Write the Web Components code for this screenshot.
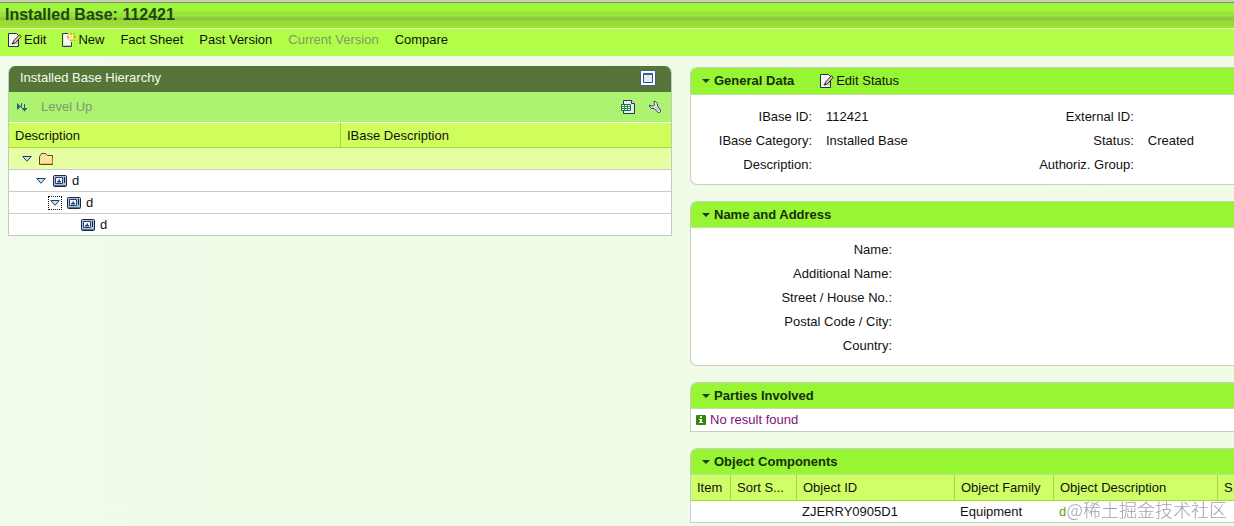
<!DOCTYPE html>
<html lang="en">
<head>
<meta charset="utf-8">
<meta name="viewport" content="width=device-width, initial-scale=1">
<title>Installed Base: 112421</title>
<style>
  html { background: #effbe7; }
  body { margin: 0; font: 13px/20px "Liberation Sans", Arial, sans-serif; color: #111; overflow-x: hidden; }
</style>
</head>
<body>
<ib-page></ib-page>

<script>
const define = (name, html, setup) => {
  const template = document.createElement('template');
  template.innerHTML = html;
  customElements.define(name, class extends HTMLElement {
    constructor() {
      super();
      this.attachShadow({ mode: 'open' }).append(template.content.cloneNode(true));
    }
    connectedCallback() { if (setup) setup(this, this.shadowRoot); }
  });
};

const ICONS = {
  edit: [14, 14, `<path d="M.5.5h8l2 2v11H.5z" fill="#f4f6fb" stroke="#2a3040"/><path d="M2 11h8V5l-5 5H2z" fill="#c5cedd"/><path d="M4.600 11l1-3L11.400 1.800l1.800 1.600L7.400 9.800z" fill="#f5cf8c" stroke="#20242c"/><path d="M4 11.500l1-2 1 1z" fill="#20242c"/>`],
  create: [14, 14, `<path d="M1.500.5h8v13h-8z" fill="#f7f8fc"/><path d="M6 .5H.5v13h9V9" fill="none" stroke="#383c50"/><path d="M2 12h7v1H2z" fill="#b9c1d2"/><circle cx="9" cy="4" r="3.500" fill="#fff6a8"/><circle cx="9" cy="4" r="3.500" fill="none" stroke="#bb8a08" stroke-dasharray="1.200 1.500"/><path d="M9 0v2M9 6.500v2M5 4h2M11 4h3M11.500 1.500l1.500-1.500M11.500 6.500l1.500 1.500" stroke="#c79312"/><circle cx="9" cy="4" r="1.500" fill="#ffe53d"/>`],
  level: [10, 10, `<path d="M0 1v7l4-3.500z" fill="#2a5f78"/><path d="M4.500 1v5" stroke="#2a5f78"/><path d="M7.500 2v6M5 6.500h5" stroke="#245a76"/><path d="M5 6.500h5L7.500 9.500z" fill="#245a76"/>`],
  window: [16, 16, `<path d="M.5.5h15v15H.5z" fill="#fff" stroke="#3a6090"/><path d="M3.500 3.500h9v9h-9z" fill="#e3ecee" stroke="#2f557f"/><path d="M3 3h10v2H3z" fill="#2f6296"/>`],
  sheet: [14, 14, `<path d="M2.500.5h8l3 3v10h-11z" fill="#e6ecf2" stroke="#283848"/><path d="M10.500.5v3h3" fill="#fff" stroke="#283848"/><path d="M.5 4.500h9v6h-9z" fill="#f5fff5" stroke="#167046"/><path d="M1 6.500h8M1 8.500h8M3.500 5v5M6.500 5v5" stroke="#2a9260"/>`],
  wrench: [12, 12, `<path d="M5 .5h1.500l2 2v2.500l3 4v1.500l-1 1H9L5.200 7.500H2.500l-2-2V4l2 1h2l.800-.800V2.500z" fill="#dce2e5" stroke="#3b4650"/><path d="M6.500 6l3.500 4" stroke="#aab6bc"/>`],
  folder: [14, 12, `<path d="M.5 11.500v-8l2-3h4l2 2h5v9z" fill="#ffe49c" stroke="#5c4322"/><path d="M2 4h11" stroke="#fff4c8"/><path d="M2 10.500h11V5" fill="none" stroke="#efbd64"/>`],
  object: [14, 12, `<rect x=".5" y=".5" width="13" height="11" rx="1" fill="#a9c2e0" stroke="#1c2744"/><path d="M2.500 2.500h7v6h-7z" fill="#f4f8ff" stroke="#2b4068"/><path d="M4 7.500V6h1.500V4.500H7V6h1v1.500z" fill="#2b4068"/><path d="M11.500 2v6" stroke="#1c2744"/><path d="M1 10.500h12" stroke="#54719b"/>`],
  open: [10, 6, `<path d="M.8.5h8.400L5 5.300z" fill="#c9e1f5" stroke="#24405f"/>`],
  caret: [8, 4, `<path d="M0 0h8L4 4z" fill="#1d4010"/>`],
  info: [10, 10, `<rect width="10" height="10" rx="1" fill="#2f8a0b"/><path d="M4 1h2v2H4zM3 4h3v3h1v1H3V7h1V5H3z" fill="#f4ffe9"/>`]
};

define('ui-icon', `
  <style>:host { display: inline-flex; flex: none; } svg { display: block; }</style>
  <svg aria-hidden="true"></svg>`, (el, root) => {
  const [w, h, body] = ICONS[el.getAttribute('name')];
  const svg = root.querySelector('svg');
  svg.setAttribute('width', w);
  svg.setAttribute('height', h);
  svg.setAttribute('viewBox', `0 0 ${w} ${h}`);
  svg.innerHTML = body;
});

define('ui-action', `
  <style>
    :host { display: inline-flex; }
    button { display: flex; align-items: center; gap: 2px; margin: 0; padding: 0; border: 0; background: none;
      font: inherit; color: inherit; white-space: nowrap; cursor: pointer; }
    button:disabled { color: #7d9a70; cursor: default; }
  </style>
  <button type="button"><slot name="icon"></slot><slot></slot></button>`, (el, root) => {
  const button = root.querySelector('button');
  button.disabled = el.hasAttribute('disabled');
  if (el.hasAttribute('label')) button.setAttribute('aria-label', el.getAttribute('label'));
});

define('ib-header', `
  <style>
    :host { display: block; }
    .title { border-top: 2px solid #cbcdbd; background: linear-gradient(#77955a 0 1px, #a0f43c 1px 9px, #97e43b 10px 14px, #8bcb3f 16px 18px, #9adb35 19px 22px, #9fe338); border-bottom: 1px solid #e6fbc4; }
    h1 { margin: 0; padding: 1px 5px; font-size: 16px; line-height: 24px; color: #234510; }
    .bar { display: flex; gap: 16px; padding: 0 8px 6px; background: #b1fd48; border-top: 1px solid #b1fd48; }
  </style>
  <div class="title"><h1><slot name="title"></slot></h1></div>
  <div class="bar"><slot></slot></div>`);

define('ib-tree', `
  <style>
    :host { display: block; border: 1px solid #c3cbbd; border-top: 0; border-radius: 7px 7px 0 0; overflow: hidden; background: #fff; }
    header { display: flex; align-items: center; justify-content: space-between; height: 26px; padding: 0 15px 2px 11px; box-sizing: border-box; background: #587539; color: #f5fbef; }
    h2 { margin: 0; font: inherit; }
    .tools { display: flex; align-items: center; height: 30px; padding: 0 10px 0 8px; gap: 14px; background: #aef272; }
    .tools .push { margin-left: auto; }
    table { width: 100%; border-collapse: separate; border-spacing: 0; table-layout: fixed; }
    th, td { box-sizing: border-box; padding: 0 6px; text-align: left; font-weight: normal; }
    th { height: 26px; padding-top: 2px; background: #cffe5c; border-top: 1px solid #f2ffe0; border-bottom: 1px solid #a6d83c; }
    th + th { border-left: 1px solid #a6d83c; }
    td { height: 22px; border-bottom: 1px solid #c9cdca; }
    tr:last-child td { height: 21px; border-bottom: 0; }
    .selected td { background: #e6ffa3; }
    .node { display: flex; align-items: center; gap: 5px; height: 21px; }
    .l1 { padding-left: 5px; } .l2 { padding-left: 19px; } .l3 { padding-left: 33px; } .l4 { padding-left: 66px; }
    .toggle { display: flex; align-items: center; justify-content: center; box-sizing: border-box; width: 14px; height: 14px; padding: 0; margin: 0; border: 1px dotted transparent; background: none; }
    .focus { border-color: #111; }
  </style>
  <header><h2>Installed Base Hierarchy</h2><ui-action label="Maximize"><ui-icon slot="icon" name="window"></ui-icon></ui-action></header>
  <div class="tools">
    <ui-action label="Expand level"><ui-icon slot="icon" name="level"></ui-icon></ui-action>
    <ui-action disabled>Level Up</ui-action>
    <ui-action class="push" label="Export"><ui-icon slot="icon" name="sheet"></ui-icon></ui-action>
    <ui-action label="Personalize"><ui-icon slot="icon" name="wrench"></ui-icon></ui-action>
  </div>
  <table>
    <thead><tr><th>Description</th><th>IBase Description</th></tr></thead>
    <tbody>
      <tr class="selected"><td colspan="2"><div class="node l1"><button class="toggle" type="button" aria-label="Collapse"><ui-icon name="open"></ui-icon></button><ui-icon name="folder"></ui-icon></div></td></tr>
      <tr><td colspan="2"><div class="node l2"><button class="toggle" type="button" aria-label="Collapse"><ui-icon name="open"></ui-icon></button><ui-icon name="object"></ui-icon><span>d</span></div></td></tr>
      <tr><td colspan="2"><div class="node l3"><button class="toggle focus" type="button" aria-label="Collapse"><ui-icon name="open"></ui-icon></button><ui-icon name="object"></ui-icon><span>d</span></div></td></tr>
      <tr><td colspan="2"><div class="node l4"><ui-icon name="object"></ui-icon><span>d</span></div></td></tr>
    </tbody>
  </table>`);

define('ib-section', `
  <style>
    :host { display: block; border: 1px solid #c5cfc2; border-right: 0; border-radius: 7px 0 0 0; overflow: hidden; background: #fff; }
    :host([rounded]) { border-bottom-left-radius: 7px; }
    header { display: flex; align-items: center; gap: 26px; height: 26px; padding-left: 11px; background: #97f534; border-bottom: 1px solid #bfe1a0; box-sizing: border-box; }
    :host([actions]) header { height: 27px; }
    h2 { margin: 0; font: inherit; font-weight: bold; }
    button { display: flex; align-items: center; gap: 4px; margin: 0; padding: 0; border: 0; background: none; font: inherit; color: #163009; }
  </style>
  <header><h2><button type="button" aria-expanded="true"><ui-icon name="caret"></ui-icon><slot name="title"></slot></button></h2><slot name="action"></slot></header>
  <slot></slot>`);

define('ib-fields', `
  <style>
    :host { display: grid; column-gap: 14px; grid-auto-rows: 24px; line-height: 24px; padding: 10px 0 7px; white-space: nowrap;
      grid-template-columns: 121px minmax(0, 13fr) 107px minmax(0, 6fr); }
    :host([single]) { grid-template-columns: 201px minmax(0, 1fr); }
    ::slotted(b) { font-weight: normal; text-align: right; }
  </style>
  <slot></slot>`);

define('ib-components', `
  <style>
    :host { display: block; }
    table { width: 100%; border-spacing: 0; table-layout: fixed; }
    th, td { box-sizing: border-box; padding: 0 0 0 6px; text-align: left; font-weight: normal; white-space: nowrap; overflow: hidden; }
    th { height: 26px; background: #cffe66; border-bottom: 1px solid #a6d83c; border-right: 1px solid #a6d83c; }
    td { height: 21px; padding-left: 5px; }
    th:last-child { border-right: 0; }
    .item { width: 40px; } .sort { width: 66px; } .id { width: 158px; } .family { width: 99px; } .desc { width: 164px; }
    a { color: #6f9a0c; text-decoration: none; }
  </style>
  <table>
    <thead><tr><th class="item">Item</th><th class="sort">Sort S...</th><th class="id">Object ID</th><th class="family">Object Family</th><th class="desc">Object Description</th><th>S</th></tr></thead>
    <tbody><tr><td></td><td></td><td>ZJERRY0905D1</td><td>Equipment</td><td><a href="#d">d</a></td><td></td></tr></tbody>
  </table>`);

define('ib-page', `
  <style>
    :host { display: block; min-height: 100vh; background: linear-gradient(90deg, #f0fce9, #effbe4); }
    main { display: grid; grid-template-columns: minmax(0, 83fr) minmax(0, 68fr); gap: 18px; align-items: start; padding: 10px 0 0 8px; }
    .details { display: grid; gap: 16px; padding-top: 1px; }
    .message { display: flex; align-items: center; gap: 4px; height: 22px; margin: 0; padding-left: 5px; color: #80107f; }
    .mark { position: fixed; right: 7px; bottom: 5px; font: 300 18px/24px "Noto Sans CJK SC", sans-serif; color: #a3a0a6; pointer-events: none; }
  </style>
  <ib-header>
    <span slot="title">Installed Base: 112421</span>
    <ui-action><ui-icon slot="icon" name="edit"></ui-icon>Edit</ui-action>
    <ui-action><ui-icon slot="icon" name="create"></ui-icon>New</ui-action>
    <ui-action>Fact Sheet</ui-action>
    <ui-action>Past Version</ui-action>
    <ui-action disabled>Current Version</ui-action>
    <ui-action>Compare</ui-action>
  </ib-header>
  <main>
    <ib-tree></ib-tree>
    <div class="details">
      <ib-section rounded actions>
        <span slot="title">General Data</span>
        <ui-action slot="action"><ui-icon slot="icon" name="edit"></ui-icon>Edit Status</ui-action>
        <ib-fields>
          <b>IBase ID:</b><span>112421</span><b>External ID:</b><span></span>
          <b>IBase Category:</b><span>Installed Base</span><b>Status:</b><span>Created</span>
          <b>Description:</b><span></span><b>Authoriz. Group:</b><span></span>
        </ib-fields>
      </ib-section>
      <ib-section rounded>
        <span slot="title">Name and Address</span>
        <ib-fields single>
          <b>Name:</b><span></span>
          <b>Additional Name:</b><span></span>
          <b>Street / House No.:</b><span></span>
          <b>Postal Code / City:</b><span></span>
          <b>Country:</b><span></span>
        </ib-fields>
      </ib-section>
      <ib-section>
        <span slot="title">Parties Involved</span>
        <p class="message"><ui-icon name="info"></ui-icon>No result found</p>
      </ib-section>
      <ib-section>
        <span slot="title">Object Components</span>
        <ib-components></ib-components>
      </ib-section>
    </div>
  </main>
  <div class="mark">@稀土掘金技术社区</div>`);
</script>
</body>
</html>
